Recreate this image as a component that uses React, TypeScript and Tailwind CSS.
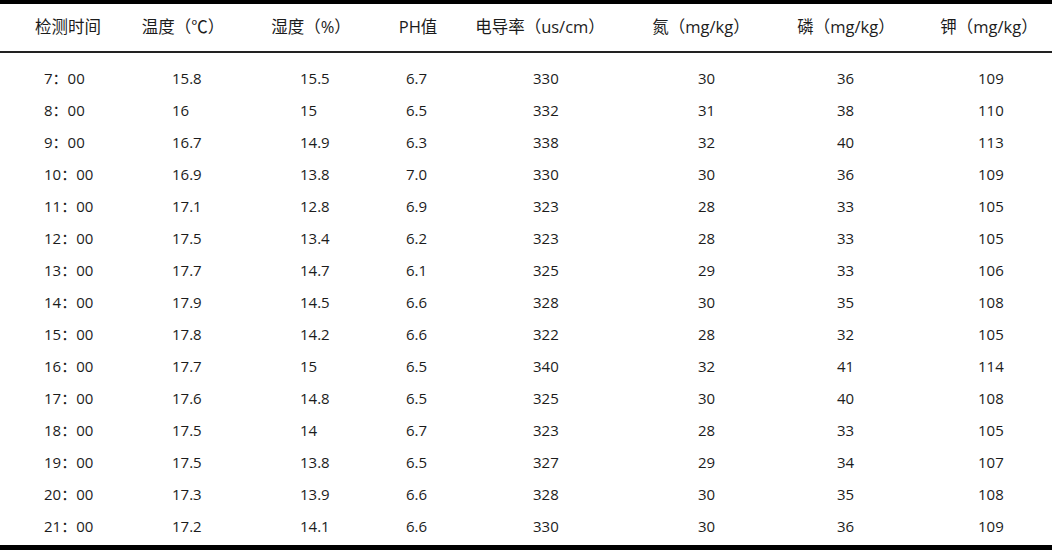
import React from 'react'

const headers = ['检测时间', '温度（℃）', '湿度（%）', 'PH值', '电导率（us/cm）', '氮（mg/kg）', '磷（mg/kg）', '钾（mg/kg）']

// left offsets of the values inside each column
const pads = ['pl-[44px]', 'pl-[40px]', 'pl-[70px]', 'pl-[18px]', 'pl-[89px]', 'pl-[66px]', 'pl-[71px]', 'pl-[56px]']

const rows = [
  ['7：00', '15.8', '15.5', '6.7', '330', '30', '36', '109'],
  ['8：00', '16', '15', '6.5', '332', '31', '38', '110'],
  ['9：00', '16.7', '14.9', '6.3', '338', '32', '40', '113'],
  ['10：00', '16.9', '13.8', '7.0', '330', '30', '36', '109'],
  ['11：00', '17.1', '12.8', '6.9', '323', '28', '33', '105'],
  ['12：00', '17.5', '13.4', '6.2', '323', '28', '33', '105'],
  ['13：00', '17.7', '14.7', '6.1', '325', '29', '33', '106'],
  ['14：00', '17.9', '14.5', '6.6', '328', '30', '35', '108'],
  ['15：00', '17.8', '14.2', '6.6', '322', '28', '32', '105'],
  ['16：00', '17.7', '15', '6.5', '340', '32', '41', '114'],
  ['17：00', '17.6', '14.8', '6.5', '325', '30', '40', '108'],
  ['18：00', '17.5', '14', '6.7', '323', '28', '33', '105'],
  ['19：00', '17.5', '13.8', '6.5', '327', '29', '34', '107'],
  ['20：00', '17.3', '13.9', '6.6', '328', '30', '35', '108'],
  ['21：00', '17.2', '14.1', '6.6', '330', '30', '36', '109'],
]

const cols = 'grid grid-cols-[132px_98px_158px_56px_188px_134px_156px_130px]'

export default function App() {
  return (
    <div className="w-[1056px] h-[550px] bg-white overflow-hidden text-[#1c1c1c] font-['Open_Sans','Noto_Sans_CJK_SC',sans-serif]">
      <div className="w-[1052px]">
        {/* top rule */}
        <div className="h-[4px] bg-black"></div>

        {/* header */}
        <div className={`${cols} h-[49px] items-center text-[16.5px] border-b-2 border-[#222]`}>
          {headers.map((h, i) => (
            <div key={i} className="text-center whitespace-nowrap pl-[4px]">
              {h}
            </div>
          ))}
        </div>

        {/* body */}
        <div className="pt-[9px] pb-[3px]">
          {rows.map((r, i) => (
            <div key={i} className={`${cols} h-[32px] items-center text-[15px]`}>
              {r.map((v, j) => (
                <div key={j} className={`${pads[j]} whitespace-nowrap`}>
                  {v}
                </div>
              ))}
            </div>
          ))}
        </div>

        {/* bottom rule */}
        <div className="h-[5px] bg-black"></div>
      </div>
    </div>
  )
}
